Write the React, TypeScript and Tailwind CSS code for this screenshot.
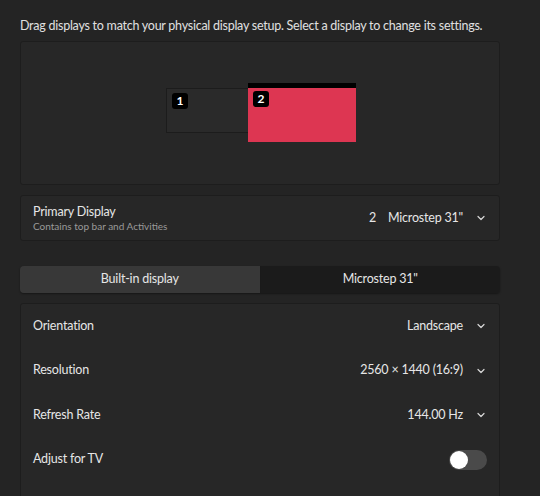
import React from 'react';

const font = { fontFamily: 'Lato, "Noto Sans", sans-serif' };

function Chevron() {
  return (
    <svg width="10" height="10" viewBox="0 0 10 10" className="ml-[13px] shrink-0">
      <path d="M2 3.5 L5 6.5 L8 3.5" fill="none" stroke="#d8d8d8" strokeWidth="1.2" strokeLinecap="round" strokeLinejoin="round" />
    </svg>
  );
}

function Row({ label, value }: { label: string; value?: string }) {
  return (
    <div className="flex items-center justify-between h-[44.5px] pl-[12px] pr-[13px]">
      <span className="text-[12.5px] tracking-[-0.2px] text-[#e6e6e6]">{label}</span>
      {value ? (
        <span className="flex items-center text-[12.5px] tracking-[-0.2px] text-[#e6e6e6]">
          {value}
          <Chevron />
        </span>
      ) : (
        <div className="relative w-[38px] h-[20px] rounded-full bg-[#4a4a4a] mr-[-1px]">
          <div className="absolute left-[1px] top-[1px] w-[18px] h-[18px] rounded-full bg-white" />
        </div>
      )}
    </div>
  );
}

export default function App() {
  return (
    <div className="w-[540px] h-[496px] overflow-hidden bg-[#242424] text-[#e6e6e6]" style={font}>
      <div className="w-[480px] ml-[20px]">
        <p className="pt-[16px] text-[12.5px] leading-[20px] tracking-[-0.25px] text-[#e0e0e0] whitespace-nowrap">
          Drag displays to match your physical display setup. Select a display to change its settings.
        </p>

        {/* arrangement canvas */}
        <div className="relative mt-[5px] h-[144px] rounded-[3px] border border-[#1d1d1d] bg-[#272727]">
          <div className="absolute left-[145px] top-[46px] w-[83px] h-[45px] bg-[#2a2a2a] border border-[#1c1c1c]">
            <span className="absolute left-[5px] top-[4px] w-[16px] h-[16px] rounded-[3px] bg-black text-white text-[12px] font-bold leading-[16px] text-center">1</span>
          </div>
          <div className="absolute left-[227px] top-[41px] w-[108px] h-[59px] bg-[#dd3652] border-t-[5px] border-black">
            <span className="absolute left-[5px] top-[3px] w-[16px] h-[16px] rounded-[3px] bg-black text-white text-[12px] font-bold leading-[16px] text-center">2</span>
          </div>
        </div>

        {/* primary display */}
        <div className="mt-[10px] h-[46px] rounded-[3px] border border-[#1d1d1d] bg-[#272727] flex items-center justify-between pl-[12px] pr-[13px]">
          <div className="flex flex-col">
            <span className="text-[12.5px] leading-[16px] tracking-[-0.2px] text-[#e6e6e6]">Primary Display</span>
            <span className="text-[10px] leading-[13px] text-[#9a9a9a]">Contains top bar and Activities</span>
          </div>
          <span className="flex items-center text-[12.5px] tracking-[-0.2px] text-[#e6e6e6]">
            <span className="mr-[12px]">2</span>
            Microstep 31"
            <Chevron />
          </span>
        </div>

        {/* display tabs */}
        <div className="mt-[25px] h-[27px] flex rounded-[4px] overflow-hidden shadow-[0_1px_2px_rgba(0,0,0,0.4)]">
          <div className="flex-1 flex items-center justify-center bg-[#383838] text-[12.5px] tracking-[-0.2px] text-[#e6e6e6] border-r border-[#1a1a1a]">
            Built-in display
          </div>
          <div className="flex-1 flex items-center justify-center bg-[#1b1b1b] text-[12.5px] tracking-[-0.2px] text-[#e6e6e6]">
            Microstep 31"
          </div>
        </div>

        {/* settings */}
        <div className="mt-[10px] rounded-[3px] border border-[#1d1d1d] bg-[#272727] h-[220px]">
          <Row label="Orientation" value="Landscape" />
          <Row label="Resolution" value="2560 × 1440 (16:9)" />
          <Row label="Refresh Rate" value="144.00 Hz" />
          <Row label="Adjust for TV" />
        </div>
      </div>
    </div>
  );
}
